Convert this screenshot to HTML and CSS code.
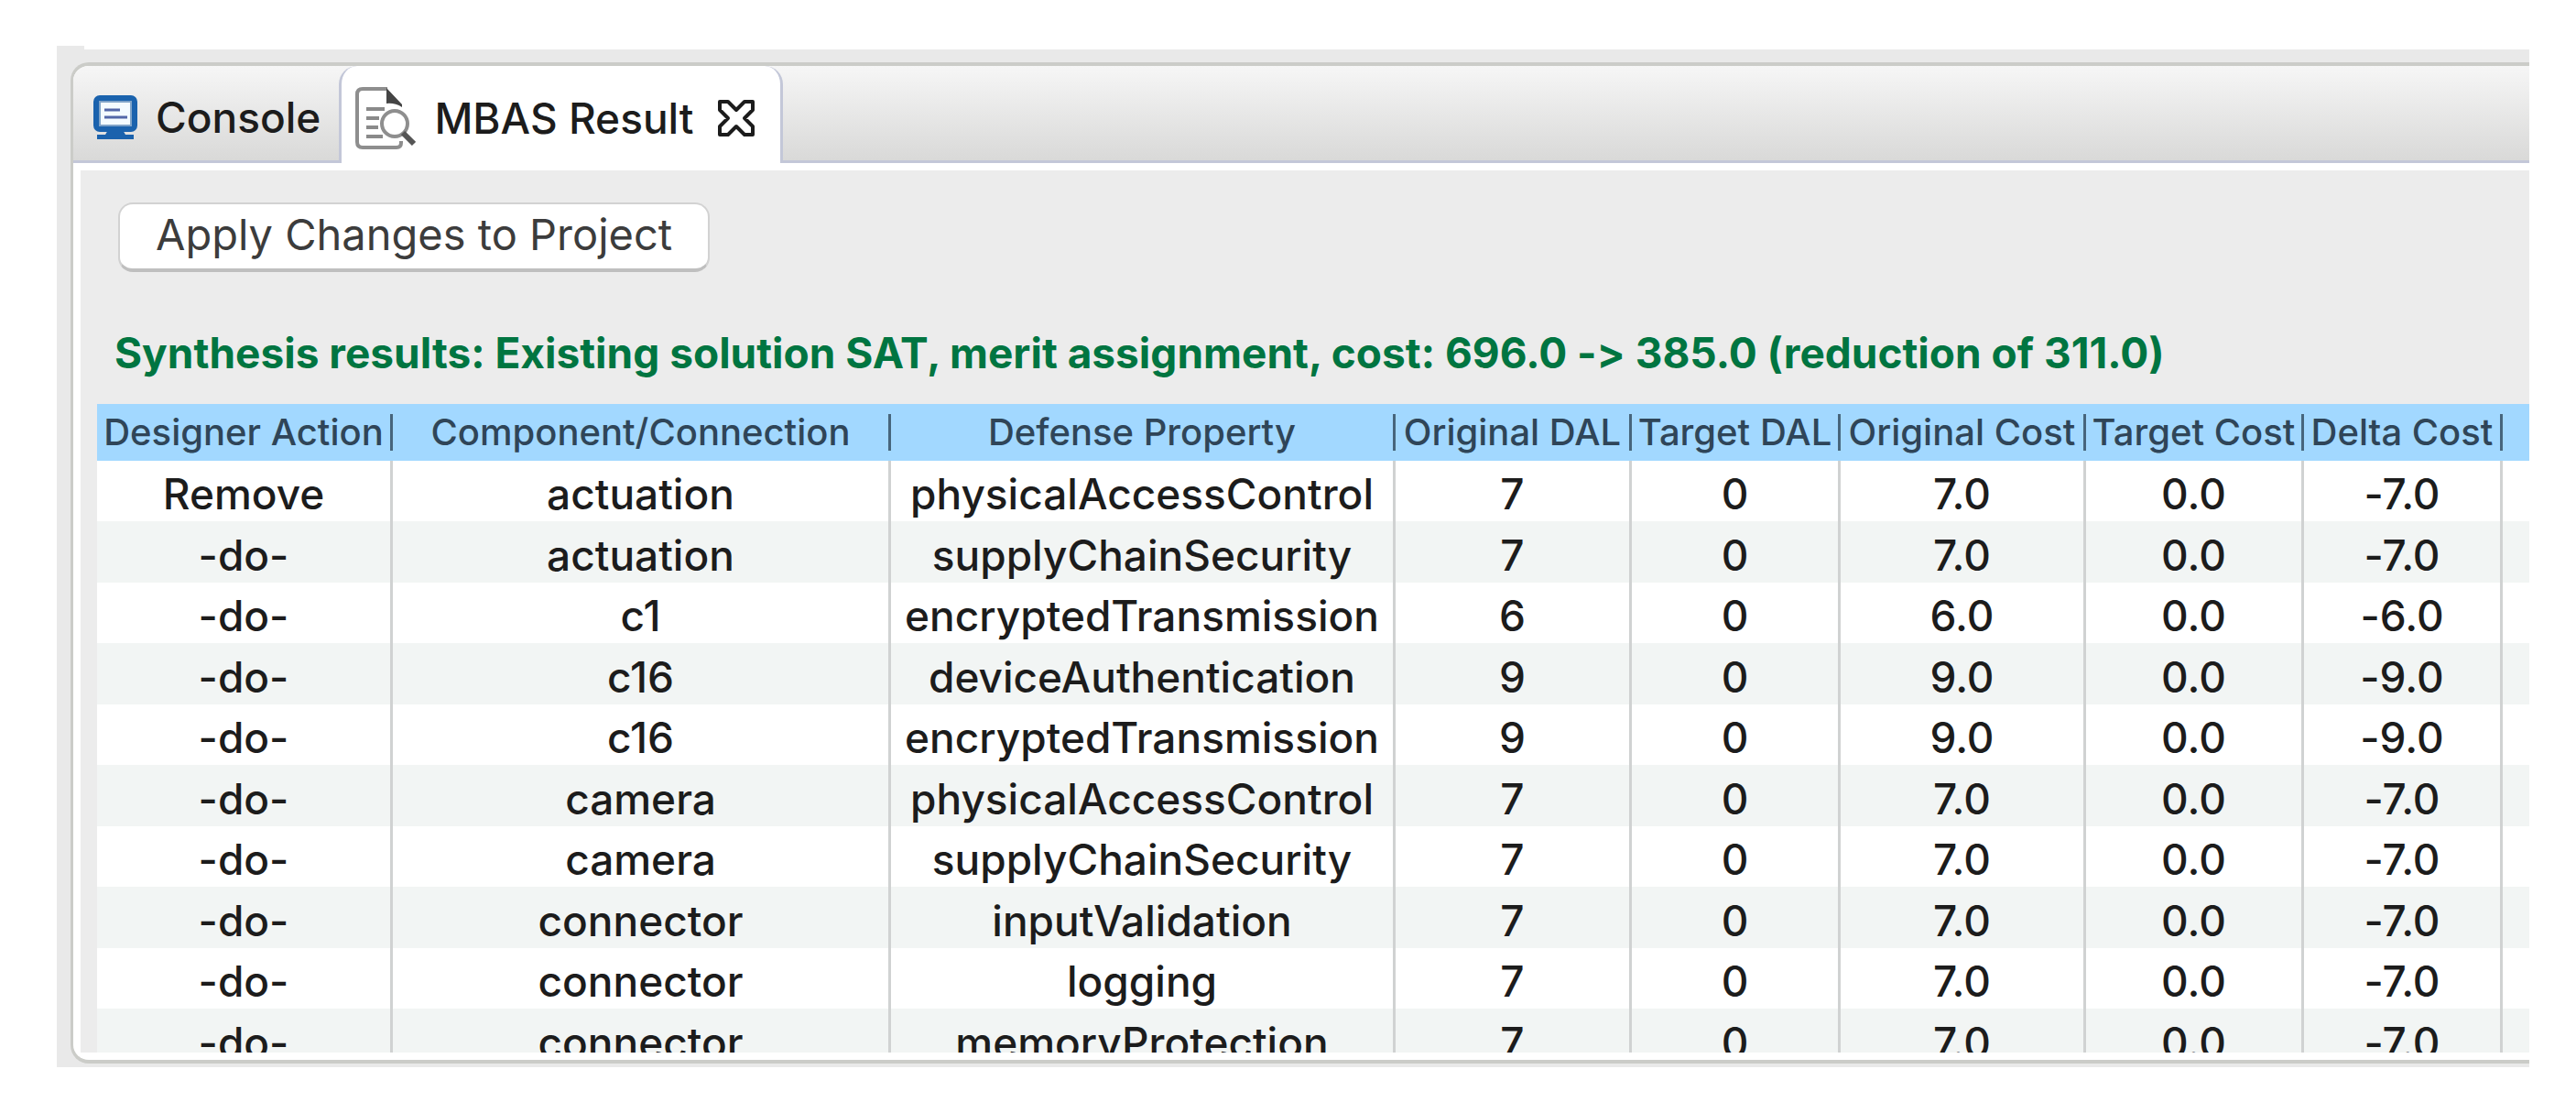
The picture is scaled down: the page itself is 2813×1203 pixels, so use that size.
FILE: index.html
```html
<!DOCTYPE html>
<html lang="en">
<head>
<meta charset="utf-8">
<title>MBAS Result</title>
<link rel="stylesheet" href="styles.css">
</head>
<body>
<div class="workbench">
  <section class="panel">
    <div class="tabs" role="tablist">
      <button class="tab" type="button" role="tab" aria-selected="false">
        <svg class="icon-console" viewBox="0 0 48 48" aria-hidden="true">
          <rect x="3" y="3" width="42" height="34" rx="4" fill="#fff" stroke="#1a62ad" stroke-width="6"/>
          <rect x="7" y="7" width="34" height="26" fill="#f4fbff" stroke="#7fa3c8" stroke-width="2"/>
          <path d="M12 16h17M12 24h25" stroke="#5367a8" stroke-width="3"/>
          <path d="M16 38h16l3 5h9v5H4v-5h9z" fill="#1a62ad"/>
        </svg>
        <span>Console</span>
      </button>
      <div class="tab tab-active" role="tab" aria-selected="true">
        <svg class="icon-result" viewBox="0 0 66 68" aria-hidden="true">
          <path d="M50 59v2q0 5-5 5H8q-6 0-6-6V8q0-6 6-6h27" fill="none" stroke="#8e8e8e" stroke-width="4"/>
          <path d="M34 1l17 18v3q-8-5-17-4z" fill="#444"/>
          <path d="M12 24h20M12 34h14M12 44h13M12 54h18" stroke="#8a8a8a" stroke-width="4"/>
          <circle cx="43" cy="40" r="14" fill="#fff" stroke="#8e8e8e" stroke-width="4"/>
          <path d="M52 50l12 12" stroke="#555" stroke-width="6"/>
        </svg>
        <span>MBAS Result</span>
        <button class="close" type="button" aria-label="Close">
          <svg viewBox="0 0 40 40" aria-hidden="true">
            <path d="M2 2h9l9 9 9-9h9v9l-9 9 9 9v9h-9l-9-9-9 9H2v-9l9-9-9-9z" fill="#fff" stroke="#1c1c1c" stroke-width="4" stroke-linejoin="round"/>
          </svg>
        </button>
      </div>
    </div>
    <div class="view">
      <button class="apply" type="button">Apply Changes to Project</button>
      <p class="summary">Synthesis results: Existing solution SAT, merit assignment, cost: 696.0 -&gt; 385.0 (reduction of 311.0)</p>
      <div class="results">
        <table>
          <colgroup>
            <col class="c-action"><col class="c-component"><col class="c-property"><col class="c-odal"><col class="c-tdal"><col class="c-ocost"><col class="c-tcost"><col class="c-delta"><col>
          </colgroup>
          <thead>
            <tr><th><span>Designer Action</span></th><th><span>Component/Connection</span></th><th><span>Defense Property</span></th><th><span>Original DAL</span></th><th><span>Target DAL</span></th><th><span>Original Cost</span></th><th><span>Target Cost</span></th><th><span>Delta Cost</span></th><td></td></tr>
          </thead>
          <tbody>
            <tr><td>Remove</td><td>actuation</td><td>physicalAccessControl</td><td>7</td><td>0</td><td>7.0</td><td>0.0</td><td>-7.0</td><td></td></tr>
            <tr><td>-do-</td><td>actuation</td><td>supplyChainSecurity</td><td>7</td><td>0</td><td>7.0</td><td>0.0</td><td>-7.0</td><td></td></tr>
            <tr><td>-do-</td><td>c1</td><td>encryptedTransmission</td><td>6</td><td>0</td><td>6.0</td><td>0.0</td><td>-6.0</td><td></td></tr>
            <tr><td>-do-</td><td>c16</td><td>deviceAuthentication</td><td>9</td><td>0</td><td>9.0</td><td>0.0</td><td>-9.0</td><td></td></tr>
            <tr><td>-do-</td><td>c16</td><td>encryptedTransmission</td><td>9</td><td>0</td><td>9.0</td><td>0.0</td><td>-9.0</td><td></td></tr>
            <tr><td>-do-</td><td>camera</td><td>physicalAccessControl</td><td>7</td><td>0</td><td>7.0</td><td>0.0</td><td>-7.0</td><td></td></tr>
            <tr><td>-do-</td><td>camera</td><td>supplyChainSecurity</td><td>7</td><td>0</td><td>7.0</td><td>0.0</td><td>-7.0</td><td></td></tr>
            <tr><td>-do-</td><td>connector</td><td>inputValidation</td><td>7</td><td>0</td><td>7.0</td><td>0.0</td><td>-7.0</td><td></td></tr>
            <tr><td>-do-</td><td>connector</td><td>logging</td><td>7</td><td>0</td><td>7.0</td><td>0.0</td><td>-7.0</td><td></td></tr>
            <tr><td>-do-</td><td>connector</td><td>memoryProtection</td><td>7</td><td>0</td><td>7.0</td><td>0.0</td><td>-7.0</td><td></td></tr>
          </tbody>
        </table>
      </div>
    </div>
  </section>
</div>
</body>
</html>
```
FILE: styles.css
```css
* { box-sizing: border-box; }

body {
  margin: 0;
  height: 100vh;
  padding: 50px 51px 38px 62px;
  display: flex;
  background: #fff;
  color: #1c1c1c;
  font-family: Inter, "Liberation Sans", sans-serif;
  font-size: 46px;
  font-weight: 500;
  font-variant-ligatures: no-contextual;
}

button {
  font: inherit;
  font-variant-ligatures: inherit;
  color: inherit;
}

.workbench {
  flex: 1;
  min-width: 0;
  display: flex;
  padding: 18px 0 4px 15px;
  background:
    linear-gradient(#e9e9e9, #e9e9e9) 0 0 / 30px 4px no-repeat,
    linear-gradient(#e9e9e9, #e9e9e9) 0 4px no-repeat;
}

.panel {
  flex: 1;
  min-width: 0;
  display: flex;
  flex-direction: column;
  overflow: hidden;
  border: solid #cbccc8;
  border-width: 4px 0 4px 3px;
  border-radius: 20px 0 0 20px;
  background: #fff;
}

.tabs {
  flex: none;
  display: flex;
  height: 106px;
  border-bottom: 3px solid #c3c7d8;
  background: linear-gradient(#f6f6f6, #d9d9d8);
}

.tab {
  display: flex;
  align-items: center;
  gap: 20px;
  padding: 8px 20px 0 22px;
  border: 0;
  background: none;
  white-space: nowrap;
}

.tab-active {
  margin-bottom: -3px;
  padding: 8px 28px 0 15px;
  border: solid #c3c7d8;
  border-width: 0 3px;
  border-radius: 20px 20px 0 0;
  background: #fff;
}

.icon-console { width: 48px; height: 48px; }
.icon-result { width: 66px; height: 68px; }

.close {
  width: 40px;
  height: 40px;
  margin-left: 6px;
  padding: 0;
  border: 0;
  background: none;
}

.close svg { display: block; }

.view {
  flex: 1;
  min-height: 0;
  display: flex;
  flex-direction: column;
  margin: 8px 0 8px 8px;
  padding: 35px 0 0 18px;
  background: #ececec;
}

.apply {
  align-self: flex-start;
  height: 76px;
  margin-left: 23px;
  padding: 0 39px 6px;
  border: 2px solid #d2d2d2;
  border-bottom: 4px solid #bfbfbf;
  border-radius: 16px;
  background: #fff;
  color: #3c3c3c;
  font-size: 47px;
  font-weight: 400;
}

.summary {
  margin: 58px 0 26px 19px;
  color: #007541;
  font-size: 46px;
  font-weight: 700;
  line-height: 60px;
  white-space: nowrap;
}

.results {
  flex: 1;
  min-height: 0;
  overflow: hidden;
  background: #fff;
}

table {
  width: 100%;
  table-layout: fixed;
  border-collapse: separate;
  border-spacing: 0;
}

.c-action { width: 323px; }
.c-component { width: 544px; }
.c-property { width: 551px; }
.c-odal { width: 258px; }
.c-tdal { width: 228px; }
.c-ocost { width: 268px; }
.c-tcost { width: 238px; }
.c-delta { width: 217px; }

th, td {
  padding: 0;
  text-align: center;
  white-space: nowrap;
}

thead tr {
  height: 62px;
  background: #a2d8ff;
}

th {
  color: #2f4558;
  font-size: 40px;
  font-weight: 500;
}

th span {
  display: block;
  height: 40px;
  border-right: 3px solid #47657c;
  line-height: 40px;
}

tbody tr { height: 66px; }

tbody tr:nth-child(even) {
  height: 67px;
  background: #f2f5f4;
}

tbody td {
  padding-top: 6px;
  border-right: 3px solid #d0d2d2;
  line-height: 60px;
}

tbody td:last-child { border-right: 0; }
```
